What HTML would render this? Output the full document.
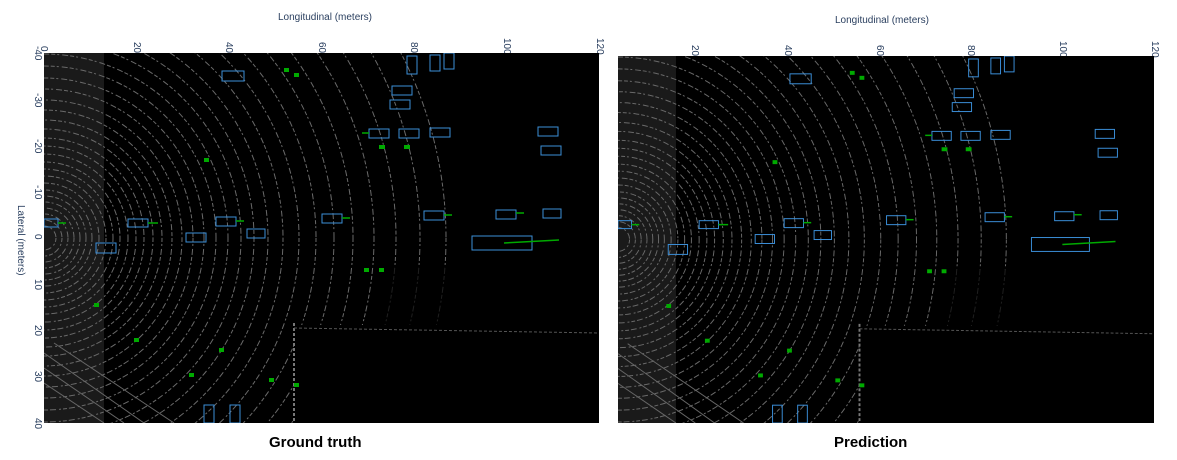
<!DOCTYPE html>
<html><head><meta charset="utf-8"><style>
html,body{margin:0;width:1177px;height:460px;overflow:hidden}
body{background:#fff;position:relative;font-family:"Liberation Sans",sans-serif}
.t{position:absolute;font-size:10px;color:#2a3f5f;transform-origin:0 0;transform:rotate(90deg);white-space:nowrap;line-height:10px}
.ax{position:absolute;font-size:10px;color:#2a3f5f;line-height:10px}
.ttl{position:absolute;font-size:15px;font-weight:bold;color:#000;line-height:17px}
svg{position:absolute}
</style></head><body>
<div class="ax" style="left:278px;top:13px">Longitudinal (meters)</div>
<div class="ax" style="left:835px;top:16px">Longitudinal (meters)</div>
<div class="t" style="left:25px;top:205px">Lateral (meters)</div>
<div class="ttl" style="left:269px;top:434px">Ground truth</div>
<div class="ttl" style="left:834px;top:434px">Prediction</div>

<div class="t" style="left:48px;top:46px">0</div>
<div class="t" style="left:141px;top:42px">20</div>
<div class="t" style="left:233px;top:42px">40</div>
<div class="t" style="left:326px;top:42px">60</div>
<div class="t" style="left:418px;top:42px">80</div>
<div class="t" style="left:511px;top:38px">100</div>
<div class="t" style="left:604px;top:38px">120</div>
<div class="t" style="left:699px;top:45px">20</div>
<div class="t" style="left:792px;top:45px">40</div>
<div class="t" style="left:884px;top:45px">60</div>
<div class="t" style="left:975px;top:45px">80</div>
<div class="t" style="left:1067px;top:41px">100</div>
<div class="t" style="left:1159px;top:41px">120</div>

<div class="t" style="left:42px;top:46px">-40</div>
<div class="t" style="left:42px;top:93px">-30</div>
<div class="t" style="left:42px;top:139px">-20</div>
<div class="t" style="left:42px;top:185px">-10</div>
<div class="t" style="left:42px;top:234px">0</div>
<div class="t" style="left:42px;top:279px">10</div>
<div class="t" style="left:42px;top:325px">20</div>
<div class="t" style="left:42px;top:371px">30</div>
<div class="t" style="left:42px;top:418px">40</div>

<svg width="1177" height="460" style="left:0;top:0">
<defs>
<g id="sc">
<rect x="0" y="0" width="555" height="370" fill="#000"/>
<g fill="none" stroke="#6a6a6a" stroke-width="1" stroke-dasharray="4 2 2 3 6 2">
<circle cx="0" cy="185" r="12"/><circle cx="0" cy="185" r="18"/><circle cx="0" cy="185" r="24"/><circle cx="0" cy="185" r="30"/><circle cx="0" cy="185" r="36"/><circle cx="0" cy="185" r="42"/><circle cx="0" cy="185" r="48"/><circle cx="0" cy="185" r="55"/><circle cx="0" cy="185" r="62"/><circle cx="0" cy="185" r="69"/><circle cx="0" cy="185" r="76"/><circle cx="0" cy="185" r="84"/><circle cx="0" cy="185" r="92"/><circle cx="0" cy="185" r="100"/><circle cx="0" cy="185" r="109"/><circle cx="0" cy="185" r="118"/><circle cx="0" cy="185" r="128"/><circle cx="0" cy="185" r="138"/><circle cx="0" cy="185" r="149"/><circle cx="0" cy="185" r="160"/><circle cx="0" cy="185" r="172"/><circle cx="0" cy="185" r="184"/><circle cx="0" cy="185" r="197"/><circle cx="0" cy="185" r="210"/><circle cx="0" cy="185" r="224"/><circle cx="0" cy="185" r="239"/><circle cx="0" cy="185" r="255"/><circle cx="0" cy="185" r="272"/><circle cx="0" cy="185" r="290"/><circle cx="0" cy="185" r="309"/><circle cx="0" cy="185" r="330"/><circle cx="0" cy="185" r="352"/><circle cx="0" cy="185" r="376"/><circle cx="0" cy="185" r="402"/>
</g>
<rect x="0" y="0" width="60" height="370" fill="#666" opacity="0.25"/>
<g stroke="#666" stroke-width="1">
<line x1="0" y1="300" x2="100" y2="370"/><line x1="0" y1="315" x2="80" y2="370"/><line x1="10" y1="290" x2="130" y2="370"/><line x1="0" y1="330" x2="60" y2="370"/>
</g>
<rect x="250" y="272" width="305" height="98" fill="#000"/>
<rect x="330" y="215" width="225" height="57" fill="#000" opacity="0.7"/>
<line x1="250" y1="270" x2="250" y2="370" stroke="#777" stroke-width="2" stroke-dasharray="3 2"/>
<line x1="250" y1="275" x2="555" y2="280" stroke="#555" stroke-width="1" stroke-dasharray="3 2"/>
<g fill="none" stroke="#3b8fd9" stroke-width="1">
<rect x="0" y="166" width="14" height="8"/><rect x="84" y="166" width="20" height="8"/><rect x="172" y="164" width="20" height="9"/><rect x="278" y="161" width="20" height="9"/><rect x="380" y="158" width="20" height="9"/><rect x="452" y="157" width="20" height="9"/><rect x="499" y="156" width="18" height="9"/><rect x="428" y="183" width="60" height="14"/><rect x="142" y="180" width="20" height="9"/><rect x="203" y="176" width="18" height="9"/><rect x="52" y="190" width="20" height="10"/><rect x="325" y="76" width="20" height="9"/><rect x="355" y="76" width="20" height="9"/><rect x="386" y="75" width="20" height="9"/><rect x="494" y="74" width="20" height="9"/><rect x="497" y="93" width="20" height="9"/><rect x="348" y="33" width="20" height="9"/><rect x="346" y="47" width="20" height="9"/><rect x="363" y="3" width="10" height="18"/><rect x="386" y="2" width="10" height="16"/><rect x="400" y="0" width="10" height="16"/><rect x="178" y="18" width="22" height="10"/><rect x="160" y="352" width="10" height="18"/><rect x="186" y="352" width="10" height="18"/>
</g>
<g stroke="#0a0" stroke-width="1.5">
<line x1="14" y1="170" x2="22" y2="170"/><line x1="104" y1="170" x2="114" y2="170"/><line x1="192" y1="168" x2="200" y2="168"/><line x1="298" y1="165" x2="306" y2="165"/><line x1="400" y1="162" x2="408" y2="162"/><line x1="472" y1="160" x2="480" y2="160"/><line x1="460" y1="190" x2="515" y2="187"/><line x1="318" y1="80" x2="325" y2="80"/>
</g>
<g fill="#0a0">
<rect x="160" y="105" width="5" height="4"/><rect x="240" y="15" width="5" height="4"/><rect x="250" y="20" width="5" height="4"/><rect x="335" y="92" width="6" height="4"/><rect x="360" y="92" width="6" height="4"/><rect x="320" y="215" width="5" height="4"/><rect x="335" y="215" width="5" height="4"/><rect x="50" y="250" width="5" height="4"/><rect x="90" y="285" width="5" height="4"/><rect x="175" y="295" width="5" height="4"/><rect x="225" y="325" width="5" height="4"/><rect x="145" y="320" width="5" height="4"/><rect x="250" y="330" width="5" height="4"/>
</g>
</g>
<clipPath id="c1"><rect x="0" y="0" width="555" height="370"/></clipPath>
<clipPath id="c2"><rect x="0" y="0" width="536" height="367"/></clipPath>
</defs>
<g transform="translate(44,53)" clip-path="url(#c1)"><use href="#sc"/></g>
<g transform="translate(618,56)" clip-path="url(#c2)"><use href="#sc" transform="scale(0.966,0.992)"/></g>
</svg>
</body></html>
